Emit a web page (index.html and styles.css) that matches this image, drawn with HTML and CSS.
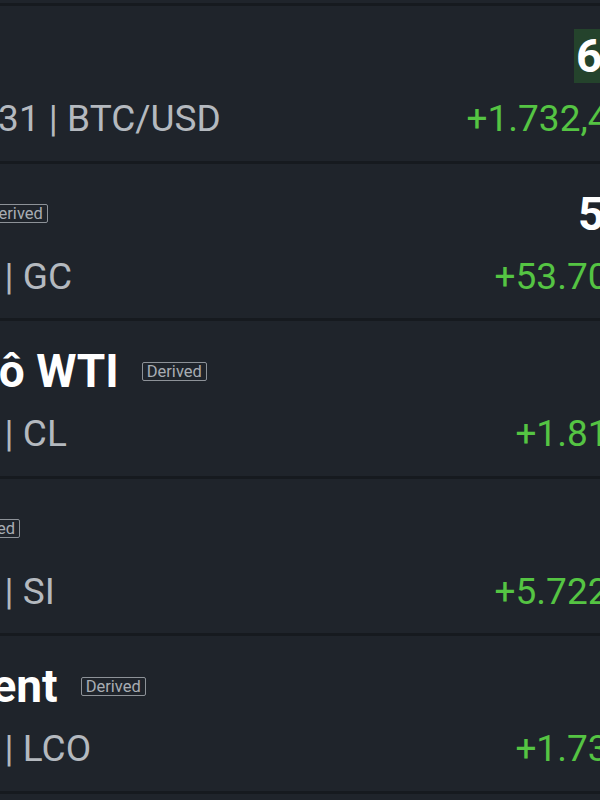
FILE: index.html
```html
<!DOCTYPE html>
<html lang="vi">
<head>
<meta charset="utf-8">
<title>Danh sách theo dõi</title>
<link rel="stylesheet" href="styles.css">
</head>
<body>
<ul class="list">
  <li class="row">
    <div class="info">
      <div class="name-line"><span class="name">Bitcoin</span></div>
      <div class="sub-line"><svg class="clock" viewBox="0 0 24 24"><circle cx="12" cy="12" r="9"/><path d="M12 7v5l3 2"/></svg><span class="sub">17:45:31 | BTC/USD</span></div>
    </div>
    <div class="quote">
      <div class="price"><span class="flash">67.234,5</span></div>
      <div class="change">+1.732,4 (+2,64%)</div>
    </div>
  </li>
  <li class="row">
    <div class="info">
      <div class="name-line"><span class="name">Vàng</span><span class="badge">Derived</span></div>
      <div class="sub-line"><svg class="clock" viewBox="0 0 24 24"><circle cx="12" cy="12" r="9"/><path d="M12 7v5l3 2"/></svg><span class="sub">16/12 | GC</span></div>
    </div>
    <div class="quote">
      <div class="price">5.683,40</div>
      <div class="change">+53.70 (+2,08%)</div>
    </div>
  </li>
  <li class="row">
    <div class="info">
      <div class="name-line"><span class="name">Dầu Thô WTI</span><span class="badge">Derived</span></div>
      <div class="sub-line"><svg class="clock" viewBox="0 0 24 24"><circle cx="12" cy="12" r="9"/><path d="M12 7v5l3 2"/></svg><span class="sub">16/12 | CL</span></div>
    </div>
    <div class="quote">
      <div class="price">71,23</div>
      <div class="change">+1.81 (+2,60%)</div>
    </div>
  </li>
  <li class="row">
    <div class="info">
      <div class="name-line"><span class="name">Bạc</span><span class="badge">Derived</span></div>
      <div class="sub-line"><svg class="clock" viewBox="0 0 24 24"><circle cx="12" cy="12" r="9"/><path d="M12 7v5l3 2"/></svg><span class="sub">16/12 | SI</span></div>
    </div>
    <div class="quote">
      <div class="price">31,245</div>
      <div class="change">+5.722 (+2,19%)</div>
    </div>
  </li>
  <li class="row">
    <div class="info">
      <div class="name-line"><span class="name">Dầu Brent</span><span class="badge">Derived</span></div>
      <div class="sub-line"><svg class="clock" viewBox="0 0 24 24"><circle cx="12" cy="12" r="9"/><path d="M12 7v5l3 2"/></svg><span class="sub">16/12 | LCO</span></div>
    </div>
    <div class="quote">
      <div class="price">75,12</div>
      <div class="change">+1.73 (+2,36%)</div>
    </div>
  </li>
  <li class="row">
    <div class="info">
      <div class="name-line"><span class="name">Đồng</span></div>
      <div class="sub-line"><span class="sub">16/12 | HG</span></div>
    </div>
    <div class="quote">
      <div class="price">4,125</div>
      <div class="change">+0.05</div>
    </div>
  </li>
</ul>
</body>
</html>
```
FILE: styles.css
```css
html, body {
  margin: 0;
  padding: 0;
  background: #1f242b;
  overflow: hidden;
  width: 600px;
  height: 800px;
}

.list {
  list-style: none;
  margin: 3px 0 0 -146px;
  padding: 0;
  width: 907px;
  font-family: Roboto, "Noto Sans", sans-serif;
}

.row {
  display: flex;
  justify-content: space-between;
  border-top: 3px solid #161a1f;
  padding: 23px 0 19.6px 0;
}

.info, .quote {
  display: flex;
  flex-direction: column;
  gap: 14px;
}

.quote { align-items: flex-end; }

.name-line {
  display: flex;
  align-items: center;
  gap: 23px;
  height: 54px;
}

.name {
  font-size: 46px;
  font-weight: 700;
  color: #ffffff;
  line-height: 54px;
  white-space: nowrap;
}

.badge {
  font-size: 16.5px;
  line-height: 17px;
  color: #a8adb3;
  border: 1.5px solid #8d9298;
  border-radius: 2px;
  padding: 0 4px;
  white-space: nowrap;
}

.sub-line {
  display: flex;
  align-items: center;
  gap: 13px;
  height: 44px;
}

.clock {
  width: 30px;
  height: 30px;
  fill: none;
  stroke: #b4b9bf;
  stroke-width: 2;
  flex: none;
}

.sub {
  font-size: 37px;
  line-height: 44px;
  color: #b4b9bf;
  white-space: nowrap;
}

.price {
  font-size: 46px;
  font-weight: 700;
  line-height: 54px;
  height: 54px;
  color: #ffffff;
  white-space: nowrap;
}

.flash {
  display: inline-block;
  background: #24432c;
  padding: 0 2px;
}

.change {
  font-size: 37px;
  line-height: 44px;
  color: #55c443;
  white-space: nowrap;
}
```
